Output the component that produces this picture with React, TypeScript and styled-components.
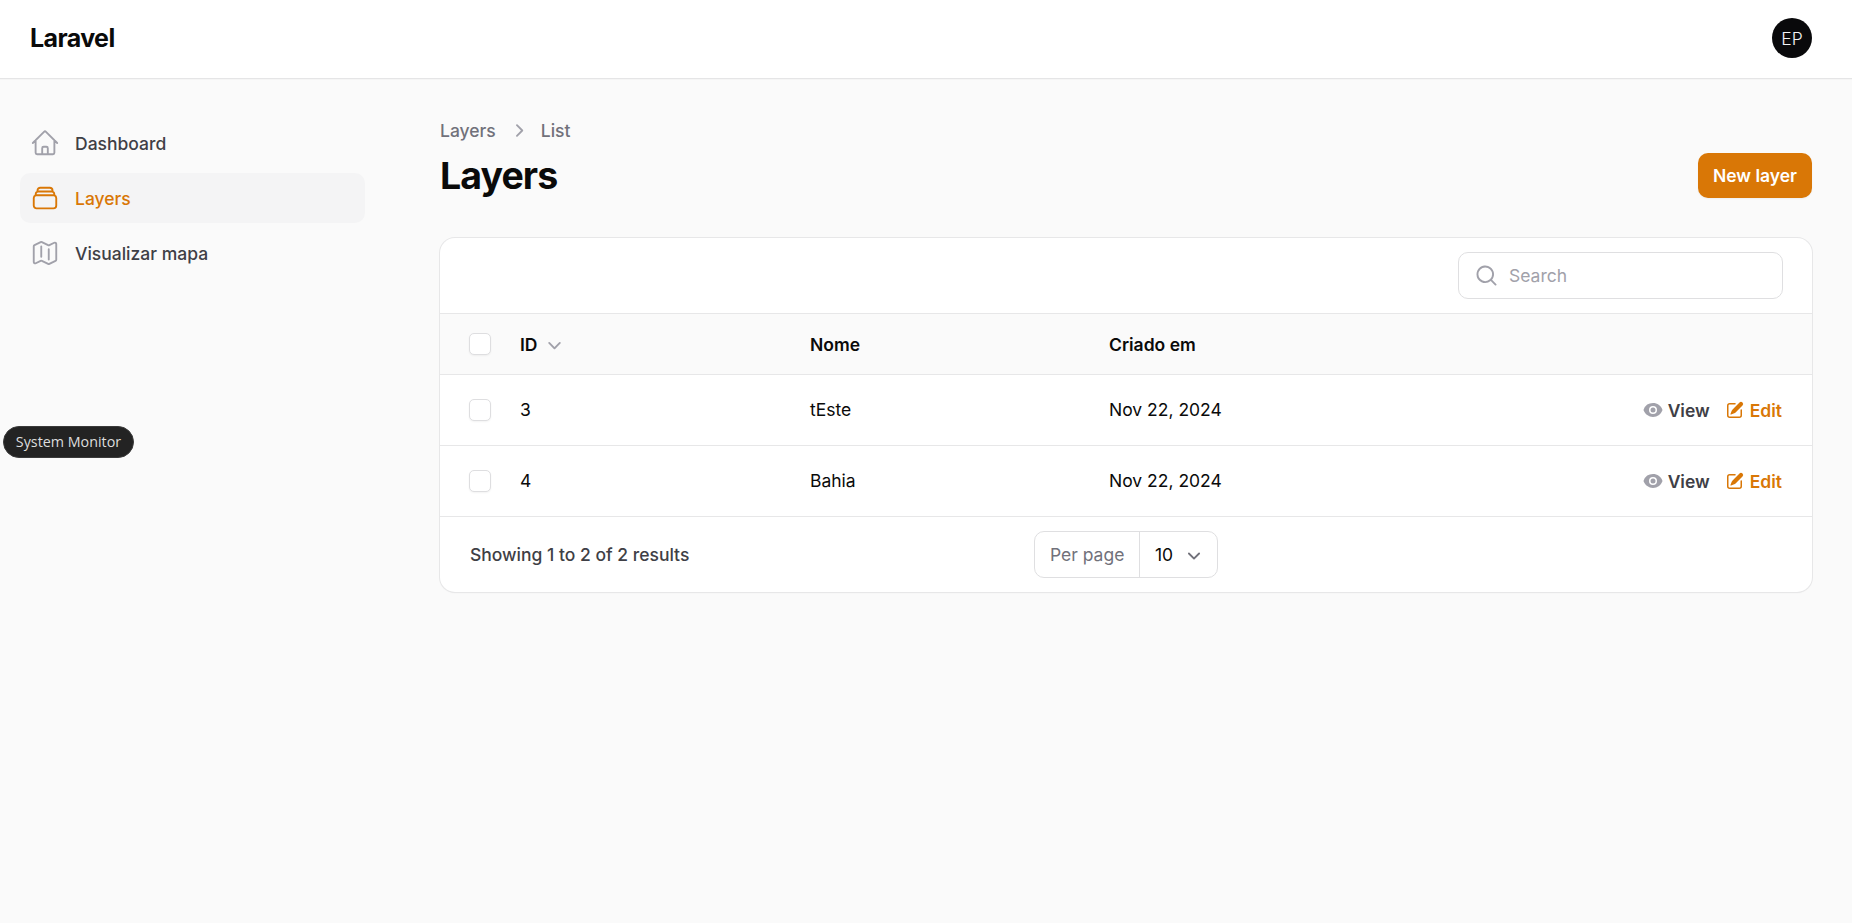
import styled, { createGlobalStyle } from "styled-components";

const GlobalStyle = createGlobalStyle`
  html, body {
    margin: 0;
    padding: 0;
    background: #fafafa;
    font-family: Inter, "Liberation Sans", sans-serif;
    font-size: 17.5px;
    color: #0a0a0a;
  }
  * { box-sizing: border-box; }
`;

const Page = styled.div`
  min-height: 923px;
  display: flex;
  flex-direction: column;
`;

const Topbar = styled.header`
  height: 79px;
  padding: 0 40px 2px 30px;
  display: flex;
  align-items: center;
  justify-content: space-between;
  background: #fff;
  border-bottom: 1px solid #e5e5e6;
  box-shadow: 0 1px 1px rgba(0, 0, 0, 0.02);
`;

const Brand = styled.div`
  font-size: 25px;
  font-weight: 700;
  letter-spacing: -0.6px;
  line-height: 1;
`;

const Avatar = styled.div`
  width: 40px;
  height: 40px;
  border-radius: 50%;
  background: #09090b;
  color: #f4f4f5;
  font-size: 17.5px;
  font-weight: 300;
  display: flex;
  align-items: center;
  justify-content: center;
`;

const Body = styled.div`
  display: flex;
  flex: 1;
`;

const Sidebar = styled.nav`
  width: 400px;
  flex: none;
  padding: 39px 35px 0 20px;
  display: flex;
  flex-direction: column;
  gap: 5px;
`;

const NavItem = styled.a<{ $active?: boolean }>`
  height: 50px;
  padding: 0 10px;
  display: flex;
  align-items: center;
  gap: 15px;
  border-radius: 10px;
  font-weight: 500;
  background: ${(p) => (p.$active ? "#f4f4f5" : "transparent")};
  color: ${(p) => (p.$active ? "#d97706" : "#3f3f46")};
  svg {
    width: 30px;
    height: 30px;
    flex: none;
    color: ${(p) => (p.$active ? "#d97706" : "#a1a1aa")};
  }
`;

const Main = styled.main`
  flex: 1;
  min-width: 0;
  padding: 39px 40px 0;
`;

const PageHead = styled.div`
  display: flex;
  align-items: center;
  justify-content: space-between;
  margin-bottom: 40px;
`;

const Breadcrumbs = styled.div`
  display: flex;
  align-items: center;
  gap: 10px;
  height: 25px;
  font-weight: 500;
  color: #71717a;
  margin-bottom: 10px;
  svg {
    width: 25px;
    height: 25px;
    color: #a1a1aa;
  }
`;

const Title = styled.h1`
  margin: 0;
  font-size: 37.5px;
  line-height: 45px;
  font-weight: 700;
  letter-spacing: -0.94px;
  color: #0a0a0a;
`;

const PrimaryButton = styled.button`
  height: 45px;
  padding: 0 15px;
  border: 0;
  border-radius: 10px;
  background: #d97706;
  color: #fff;
  font: 600 17.5px Inter, sans-serif;
  margin-top: 35px;
  box-shadow: 0 1px 2px rgba(0, 0, 0, 0.05);
`;

const Card = styled.section`
  background: #fff;
  border-radius: 15px;
  box-shadow: 0 0 0 1px #e7e7e8, 0 1px 2px rgba(0, 0, 0, 0.05);
  overflow: hidden;
`;

const Toolbar = styled.div`
  height: 75px;
  padding: 14px 29px 0;
  display: flex;
  justify-content: flex-end;
`;

const SearchBox = styled.div`
  width: 325px;
  height: 47px;
  padding: 0 15px;
  display: flex;
  align-items: center;
  gap: 10px;
  border: 1px solid #dfdfe1;
  border-radius: 10px;
  color: #a1a1aa;
  svg {
    width: 25px;
    height: 25px;
    flex: none;
  }
`;

const Table = styled.table`
  width: 100%;
  border-collapse: collapse;
  table-layout: fixed;
`;

const Head = styled.th<{ $width?: number }>`
  height: 61px;
  padding: 0;
  text-align: left;
  font-size: 17.5px;
  font-weight: 600;
  color: #0a0a0a;
  background: #fafafa;
  border-top: 1px solid #e7e7e8;
  border-bottom: 1px solid #e7e7e8;
  width: ${(p) => (p.$width ? `${p.$width}px` : "auto")};
`;

const Cell = styled.td`
  height: 71px;
  padding: 0;
  font-size: 17.5px;
  color: #0a0a0a;
  border-bottom: 1px solid #e7e7e8;
`;

const TextCell = styled(Cell)`
  padding-bottom: 2px;
`;

const SortLabel = styled.span`
  display: inline-flex;
  align-items: center;
  gap: 5px;
  svg {
    width: 25px;
    height: 25px;
    color: #a1a1aa;
  }
`;

const CheckBox = styled.span`
  display: block;
  width: 22px;
  height: 22px;
  margin-left: 29px;
  background: #fff;
  border: 1px solid #dedee0;
  border-radius: 5px;
  box-shadow: 0 1px 2px rgba(0, 0, 0, 0.05);
`;

const Actions = styled.div`
  display: flex;
  justify-content: flex-end;
  gap: 15px;
  padding-right: 30px;
`;

const ActionLink = styled.a<{ $primary?: boolean }>`
  display: inline-flex;
  align-items: center;
  gap: 5px;
  font-weight: 600;
  color: ${(p) => (p.$primary ? "#d97706" : "#3f3f46")};
  svg {
    width: 20px;
    height: 20px;
    color: ${(p) => (p.$primary ? "#d97706" : "#a1a1aa")};
  }
`;

const Footer = styled.div`
  height: 75px;
  padding: 0 30px;
  display: grid;
  grid-template-columns: 1fr auto 1fr;
  align-items: center;
  color: #3f3f46;
  font-weight: 500;
`;

const PerPage = styled.div`
  height: 47px;
  display: flex;
  align-items: stretch;
  border: 1px solid #dfdfe1;
  border-radius: 10px;
  font-weight: 400;
`;

const PerPageLabel = styled.span`
  width: 105px;
  padding: 0 0 0 15px;
  display: flex;
  align-items: center;
  color: #71717a;
  border-right: 1px solid #dfdfe1;
`;

const PerPageValue = styled.span`
  padding: 0 11px 0 15px;
  display: flex;
  align-items: center;
  gap: 9px;
  color: #0a0a0a;
  svg {
    width: 24px;
    height: 24px;
    color: #71717a;
  }
`;

const DockLabel = styled.div`
  position: fixed;
  left: 3px;
  top: 426px;
  width: 131px;
  height: 32px;
  padding-bottom: 2px;
  border-radius: 16px;
  background: #232323;
  border: 1px solid #3a3a3a;
  color: #dddddd;
  font: 14.3px "Open Sans", sans-serif;
  display: flex;
  align-items: center;
  justify-content: center;
`;

const HomeIcon = () => (
  <svg viewBox="0 0 24 24" fill="none" stroke="currentColor" strokeWidth="1.5" strokeLinecap="round" strokeLinejoin="round">
    <path d="m2.25 12 8.954-8.955c.44-.439 1.152-.439 1.591 0L21.75 12M4.5 9.75v10.125c0 .621.504 1.125 1.125 1.125H9.75v-4.875c0-.621.504-1.125 1.125-1.125h2.25c.621 0 1.125.504 1.125 1.125V21h4.125c.621 0 1.125-.504 1.125-1.125V9.75M8.25 21h8.25" />
  </svg>
);

const StackIcon = () => (
  <svg viewBox="0 0 24 24" fill="none" stroke="currentColor" strokeWidth="1.5" strokeLinecap="round" strokeLinejoin="round">
    <path d="M6 6.878V6a2.25 2.25 0 0 1 2.25-2.25h7.5A2.25 2.25 0 0 1 18 6v.878m-12 0c.235-.083.487-.128.75-.128h10.5c.263 0 .515.045.75.128m-12 0A2.25 2.25 0 0 0 4.5 9v.878m13.5-3A2.25 2.25 0 0 1 19.5 9v.878m0 0a2.246 2.246 0 0 0-.75-.128H5.25c-.263 0-.515.045-.75.128m15 0A2.25 2.25 0 0 1 21 12v6a2.25 2.25 0 0 1-2.25 2.25H5.25A2.25 2.25 0 0 1 3 18v-6c0-.98.626-1.813 1.5-2.122" />
  </svg>
);

const MapIcon = () => (
  <svg viewBox="0 0 24 24" fill="none" stroke="currentColor" strokeWidth="1.5" strokeLinecap="round" strokeLinejoin="round">
    <path d="M9 6.75V15m6-6v8.25m.503 3.498 4.875-2.437c.381-.19.622-.58.622-1.006V4.82c0-.836-.88-1.38-1.628-1.006l-3.869 1.934c-.317.159-.69.159-1.006 0L9.503 3.252a1.125 1.125 0 0 0-1.006 0L3.622 5.689C3.24 5.88 3 6.27 3 6.695V19.18c0 .836.88 1.38 1.628 1.006l3.869-1.934c.317-.159.69-.159 1.006 0l4.994 2.497c.317.158.69.158 1.006 0Z" />
  </svg>
);

const SearchIcon = () => (
  <svg viewBox="0 0 20 20" fill="currentColor">
    <path fillRule="evenodd" clipRule="evenodd" d="M9 3.5a5.5 5.5 0 1 0 0 11 5.5 5.5 0 0 0 0-11ZM2 9a7 7 0 1 1 12.452 4.391l3.328 3.329a.75.75 0 1 1-1.06 1.06l-3.329-3.328A7 7 0 0 1 2 9Z" />
  </svg>
);

const ChevronRight = () => (
  <svg viewBox="0 0 20 20" fill="currentColor">
    <path fillRule="evenodd" clipRule="evenodd" d="M8.22 5.22a.75.75 0 0 1 1.06 0l4.25 4.25a.75.75 0 0 1 0 1.06l-4.25 4.25a.75.75 0 0 1-1.06-1.06L11.94 10 8.22 6.28a.75.75 0 0 1 0-1.06Z" />
  </svg>
);

const ChevronDown = () => (
  <svg viewBox="0 0 20 20" fill="currentColor">
    <path fillRule="evenodd" clipRule="evenodd" d="M5.22 8.22a.75.75 0 0 1 1.06 0L10 11.94l3.72-3.72a.75.75 0 1 1 1.06 1.06l-4.25 4.25a.75.75 0 0 1-1.06 0L5.22 9.28a.75.75 0 0 1 0-1.06Z" />
  </svg>
);

const EyeIcon = () => (
  <svg viewBox="0 0 20 20" fill="currentColor">
    <path d="M10 12.5a2.5 2.5 0 1 0 0-5 2.5 2.5 0 0 0 0 5Z" />
    <path fillRule="evenodd" clipRule="evenodd" d="M.664 10.59a1.651 1.651 0 0 1 0-1.186A10.004 10.004 0 0 1 10 3c4.257 0 7.893 2.66 9.336 6.41.147.381.146.804 0 1.186A10.004 10.004 0 0 1 10 17c-4.257 0-7.893-2.66-9.336-6.41ZM14 10a4 4 0 1 1-8 0 4 4 0 0 1 8 0Z" />
  </svg>
);

const EditIcon = () => (
  <svg viewBox="0 0 20 20" fill="currentColor">
    <path d="m5.433 13.917 1.262-3.155A4 4 0 0 1 7.58 9.42l6.92-6.918a2.121 2.121 0 0 1 3 3l-6.92 6.918c-.383.383-.84.685-1.343.886l-3.154 1.262a.5.5 0 0 1-.65-.65Z" />
    <path d="M3.5 5.75c0-.69.56-1.25 1.25-1.25H10A.75.75 0 0 0 10 3H4.75A2.75 2.75 0 0 0 2 5.75v9.5A2.75 2.75 0 0 0 4.75 18h9.5A2.75 2.75 0 0 0 17 15.25V10a.75.75 0 0 0-1.5 0v5.25c0 .69-.56 1.25-1.25 1.25h-9.5c-.69 0-1.25-.56-1.25-1.25v-9.5Z" />
  </svg>
);

const layers = [
  { id: 3, name: "tEste", created: "Nov 22, 2024" },
  { id: 4, name: "Bahia", created: "Nov 22, 2024" },
];

function App() {
  return (
    <Page>
      <GlobalStyle />
      <Topbar>
        <Brand>Laravel</Brand>
        <Avatar>EP</Avatar>
      </Topbar>
      <Body>
        <Sidebar>
          <NavItem><HomeIcon />Dashboard</NavItem>
          <NavItem $active><StackIcon />Layers</NavItem>
          <NavItem><MapIcon />Visualizar mapa</NavItem>
        </Sidebar>
        <Main>
          <PageHead>
            <div>
              <Breadcrumbs>Layers<ChevronRight />List</Breadcrumbs>
              <Title>Layers</Title>
            </div>
            <PrimaryButton>New layer</PrimaryButton>
          </PageHead>
          <Card>
            <Toolbar>
              <SearchBox><SearchIcon />Search</SearchBox>
            </Toolbar>
            <Table>
              <thead>
                <tr>
                  <Head $width={80}><CheckBox /></Head>
                  <Head $width={290}><SortLabel>ID<ChevronDown /></SortLabel></Head>
                  <Head $width={299}>Nome</Head>
                  <Head $width={300}>Criado em</Head>
                  <Head />
                </tr>
              </thead>
              <tbody>
                {layers.map((layer) => (
                  <tr key={layer.id}>
                    <Cell><CheckBox /></Cell>
                    <TextCell>{layer.id}</TextCell>
                    <TextCell>{layer.name}</TextCell>
                    <TextCell>{layer.created}</TextCell>
                    <Cell>
                      <Actions>
                        <ActionLink><EyeIcon />View</ActionLink>
                        <ActionLink $primary><EditIcon />Edit</ActionLink>
                      </Actions>
                    </Cell>
                  </tr>
                ))}
              </tbody>
            </Table>
            <Footer>
              <span>Showing 1 to 2 of 2 results</span>
              <PerPage>
                <PerPageLabel>Per page</PerPageLabel>
                <PerPageValue>10<ChevronDown /></PerPageValue>
              </PerPage>
            </Footer>
          </Card>
        </Main>
      </Body>
      <DockLabel>System Monitor</DockLabel>
    </Page>
  );
}

export default App;
